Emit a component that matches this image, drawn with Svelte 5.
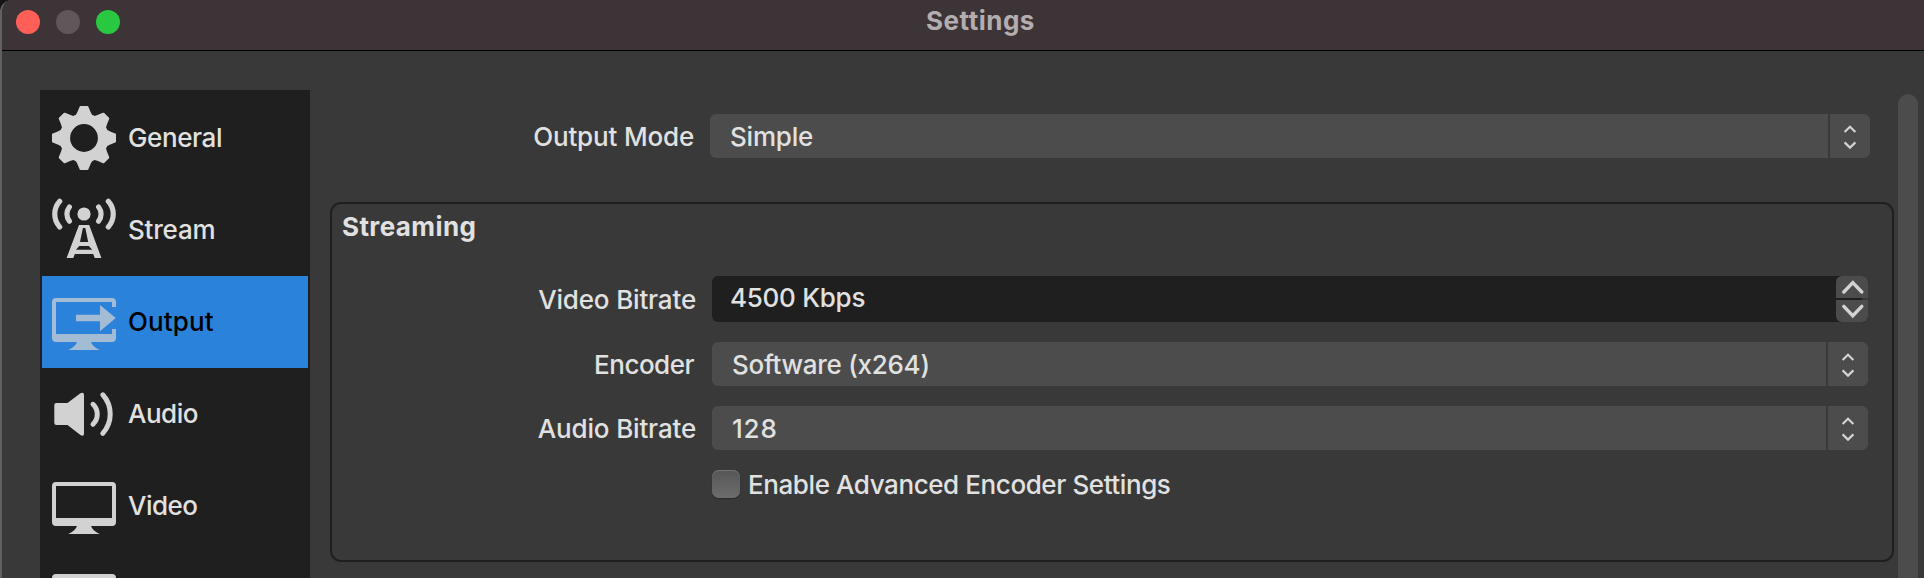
<script>
  const items = [
    { name: 'General', icon: 'gear', track: -0.4 },
    { name: 'Stream', icon: 'stream', track: -0.2 },
    { name: 'Output', icon: 'output', track: 0.1, active: true },
    { name: 'Audio', icon: 'audio', track: -0.5 },
    { name: 'Video', icon: 'video', track: -0.5 },
    { name: '', icon: 'video', track: 0 }
  ];
  const teeth = [0, 45, 90, 135, 180, 225, 270, 315];
</script>

{#snippet combo(value, track)}
  <div class="combo">
    <span class="value" style:letter-spacing="{track}px">{value}</span>
    <span class="drop">
      <svg class="stepper" width="40" height="44" viewBox="0 0 40 44">
        <path d="M14.6 18 20 12.8 25.4 18M14.6 28.4 20 33.6 25.4 28.4" />
      </svg>
    </span>
  </div>
{/snippet}

{#snippet icon(kind)}
  <svg class="icon" width="64" height="64" viewBox="0 0 64 64">
    {#if kind === 'gear'}
      <circle cx="32" cy="32" r="19.2" fill="none" stroke="currentColor" stroke-width="10.6" />
      {#each teeth as a}
        <path transform="rotate({a} 32 32)" d="M23.6 9.5Q25.4 6.5 27.6.8Q27.8 0 28.6 0H35.4Q36.2 0 36.4.8Q38.6 6.5 40.4 9.5L38 14H26Z" />
      {/each}
    {:else if kind === 'stream'}
      <circle cx="32" cy="16" r="6.6" />
      <g class="wave" stroke-width="5.2">
        <path d="M46.6 9A11.4 11.4 0 0 1 46.6 23.2M56.3 3.3A19 19 0 0 1 56.3 28.9M17.4 9A11.4 11.4 0 0 0 17.4 23.2M7.7 3.3A19 19 0 0 0 7.7 28.9" />
      </g>
      <path fill-rule="evenodd" d="M27 27H37.2L49.4 60H42.7L41.2 56H22.8L21.3 60H14.6ZM30.9 30L28 44H36.2L33.3 30ZM27.3 48L24 51.8H40.2L36.8 48Z" />
    {:else if kind === 'audio'}
      <path d="M4.3 21H15.5L28.4 11.2Q32 9.5 32 13V51.4Q32 55 28.4 53L15.5 43H4.3Q2.3 43 2.3 41V23Q2.3 21 4.3 21Z" />
      <g class="wave" stroke-width="5">
        <path d="M41 22.3A13.8 13.8 0 0 1 41 42.2M50.8 12.8A28.8 28.8 0 0 1 50.8 51.4" />
      </g>
    {:else}
      {#if kind === 'output'}
        <path d="M4 8H60Q64 8 64 12V17H60V12H4V44H60V39H64V48Q64 52 60 52H4Q0 52 0 48V12Q0 8 4 8Z" />
        <path d="M24 24.8H48V15L63.8 28 48 41.2V31.2H24Z" />
      {:else}
        <path fill-rule="evenodd" d="M4 8H60Q64 8 64 12V48Q64 52 60 52H4Q0 52 0 48V12Q0 8 4 8ZM4 12V44H60V12Z" />
      {/if}
      <path d="M25.2 51.5H38.8Q40.5 57 47.7 60H16.3Q23.5 57 25.2 51.5Z" />
    {/if}
  </svg>
{/snippet}

<div class="window">
  <header>
    <div class="lights"><i class="close"></i><i class="min"></i><i class="zoom"></i></div>
    <h1>Settings</h1>
  </header>
  <div class="body">
    <nav>
      {#each items as item}
        <div class="item" class:active={item.active}>
          {@render icon(item.icon)}
          <span style:letter-spacing="{item.track}px">{item.name}</span>
        </div>
      {/each}
    </nav>
    <main>
      <div class="row mode">
        <div class="label">Output Mode</div>
        {@render combo('Simple', -0.2)}
      </div>
      <section>
        <h2>Streaming</h2>
        <div class="row">
          <div class="label">Video Bitrate</div>
          <div class="spin">
            <span class="value">4500 Kbps</span>
            <div class="buttons">
              <svg width="32" height="22" viewBox="0 0 32 22"><path d="M7.8 16 16.8 6.6 25.8 16" /></svg>
              <svg width="32" height="22" viewBox="0 0 32 22"><path d="M7.8 6.4 16.8 15.8 25.8 6.4" /></svg>
            </div>
          </div>
        </div>
        <div class="row">
          <div class="label encoder">Encoder</div>
          {@render combo('Software (x264)', -0.28)}
        </div>
        <div class="row">
          <div class="label">Audio Bitrate</div>
          {@render combo('128', 0.8)}
        </div>
        <div class="check"><i></i><span>Enable Advanced Encoder Settings</span></div>
      </section>
    </main>
    <div class="scroll"></div>
  </div>
</div>

<style>
  :global(body) { margin: 0; background: #161415; }
  .window {
    box-sizing: border-box; width: 1924px; height: 578px; overflow: hidden;
    display: flex; flex-direction: column;
    background: #393939; color: #e1e1e1;
    border-left: 2px solid #616161; border-top-left-radius: 12px;
    font: 450 26px "Inter", sans-serif; white-space: nowrap;
  }
  header {
    flex: none; height: 50px; background: #3c3436; border-bottom: 1px solid #000;
    display: grid; grid-template-columns: 1fr auto 1fr; align-items: start;
  }
  .lights { display: flex; gap: 16px; padding: 10px 0 0 14px; }
  .lights i { width: 24px; height: 24px; border-radius: 50%; }
  .close { background: #ff5f57; }
  .min { background: #5f5759; }
  .zoom { background: #28c840; }
  h1 { margin: 0; padding-left: 35px; font-size: 26px; font-weight: 700; line-height: 42px; letter-spacing: .5px; color: #b4adaf; }
  .body { flex: 1; min-height: 0; display: flex; align-items: stretch; }
  nav {
    box-sizing: border-box; flex: none; width: 270px; margin: 39px 0 0 38px; padding: 2px;
    background: #1f1f1f; overflow: hidden;
  }
  .item { height: 92px; display: flex; align-items: center; padding-left: 10px; color: #e1e1e1; }
  .item span { margin-left: 12px; padding-bottom: 2px; }
  .icon { flex: none; fill: currentColor; color: #d2d2d2; }
  .wave { fill: none; stroke: currentColor; stroke-linecap: round; }
  .item.active { background: #2a82da; color: #000; }
  .active .icon { color: #a2bcd6; }
  main { flex: 1; padding: 63px 4px 0 20px; }
  .row { display: flex; align-items: center; margin-bottom: 20px; }
  .label { flex: none; width: 364px; margin-right: 16px; padding-top: 1px; text-align: right; letter-spacing: -.17px; }
  .label.encoder { width: 362px; margin-right: 18px; letter-spacing: -.5px; }
  .mode { margin: 0 24px 44px 0; }
  .combo { flex: 1; height: 44px; display: flex; line-height: 46px; border-radius: 6px; background: #4c4c4c; overflow: hidden; }
  .combo .value { flex: 1; padding-left: 20px; }
  .drop { width: 40px; border-left: 2px solid #393939; }
  .stepper { display: block; fill: none; stroke: #d2d2d2; stroke-width: 2.2; }
  section {
    box-sizing: border-box; height: 360px; padding-right: 24px;
    border: 2px solid #1f1f1f; border-radius: 11px;
  }
  h2 { margin: 0 0 26px; padding-left: 10px; font-size: 26px; font-weight: 700; line-height: 46px; letter-spacing: .4px; }
  .spin { flex: 1; height: 46px; display: flex; background: #1f1f1f; border-radius: 6px; overflow: hidden; }
  .spin .value { flex: 1; padding-left: 18px; line-height: 43px; letter-spacing: -.28px; }
  .buttons { display: flex; flex-direction: column; gap: 2px; background: linear-gradient(#1f1f1f, #1f1f1f) left / 26px 100% no-repeat #393939; }
  .buttons svg { display: block; background: #4c4c4c; fill: none; stroke: #d2d2d2; stroke-width: 3.4; stroke-linecap: round; }
  .buttons svg:first-child { border-radius: 6px 6px 0 0; }
  .buttons svg:last-child { border-radius: 0 0 6px 6px; }
  .check { display: flex; align-items: center; height: 28px; padding-left: 380px; }
  .check i { width: 28px; height: 28px; border-radius: 7px; background: linear-gradient(#565656, #6d6d6d); box-shadow: inset 0 1px 0 #747474, 0 1px 1px #2a2a2a; }
  .check span { margin-left: 8px; padding-top: 1px; letter-spacing: -.41px; }
  .scroll { flex: none; width: 20px; margin: 43px 6px 0 0; border-radius: 10px 10px 0 0; background: #4c4c4c; }
</style>
